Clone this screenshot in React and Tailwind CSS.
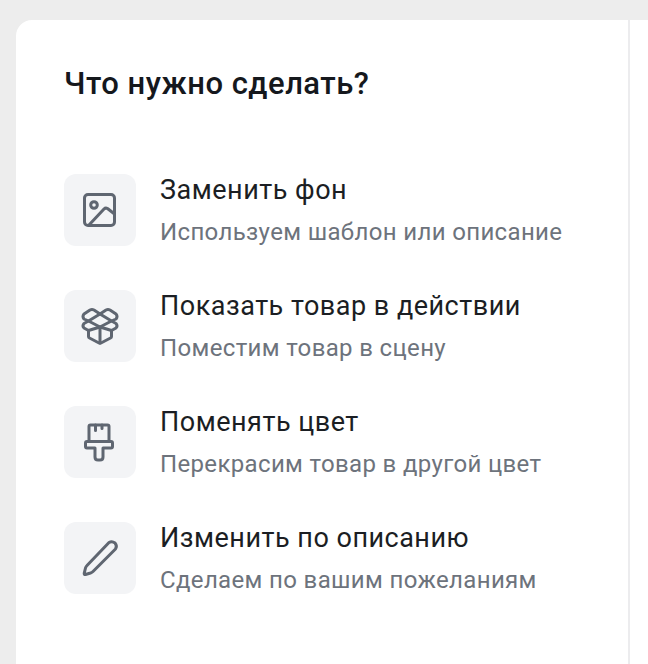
import React from 'react';

const iconProps = {
  width: 40,
  height: 40,
  viewBox: '0 0 40 40',
  fill: 'none',
  stroke: '#5f6671',
  strokeWidth: 3,
  strokeLinecap: 'round',
  strokeLinejoin: 'round',
};

const ImageIcon = () => (
  <svg {...iconProps}>
    <rect x="4.500" y="4.500" width="30" height="31" rx="3.500" />
    <circle cx="14" cy="15" r="3.300" />
    <path d="M9 35 L24 19 Q25.500 17.500 27.500 18.500 L34.500 24" />
  </svg>
);

const BoxIcon = () => (
  <svg {...iconProps}>
    <path d="M20 8 L14 4 Q12 3 10 4 L4 8 Q2 10.500 4 13 L8.500 15 L4 17.500 Q2 20 4 22 L8.500 24.500 L20 21 L31.500 24.500 L36 22 Q38 20 36 17.500 L31.500 15 L36 13 Q38 10.500 36 8 L30 4 Q28 3 26 4 Z" />
    <path d="M8.500 15 L20 8 L31.500 15 L20 21 Z" />
    <path d="M8.500 24.500 V30.500 Q8.500 31.500 9.500 32 L19 37 Q20 37.500 21 37 L30.500 32 Q31.500 31.500 31.500 30.500 V24.500" />
    <path d="M20 21 V37" />
  </svg>
);

const BrushIcon = () => (
  <svg {...iconProps}>
    <path d="M9 19.500 V4.500 Q9 3 10.500 3 H27.500 Q29 3 29 4.500 V19.500" />
    <path d="M15.500 3 V8.500 M22 3 V6.500" />
    <path d="M7 19.500 H31 Q32.500 19.500 32.500 21 V24.500 Q32.500 26 31 26 H23 V35 Q23 38 20 38 H18 Q15 38 15 35 V26 H7 Q5.500 26 5.500 24.500 V21 Q5.500 19.500 7 19.500 Z" />
  </svg>
);

const PenIcon = () => (
  <svg {...iconProps}>
    <path d="M29 4.500 Q32 2.800 35 5 Q37.500 8 35.500 11 L13 33.500 Q12 34.500 10.500 35 L5.500 36.500 Q4 36.800 4.200 35.300 L5.500 30 Q6 28.500 7 27.500 Z" />
  </svg>
);

const items = [
  { title: 'Заменить фон', subtitle: 'Используем шаблон или описание', icon: <ImageIcon /> },
  { title: 'Показать товар в действии', subtitle: 'Поместим товар в сцену', icon: <BoxIcon /> },
  { title: 'Поменять цвет', subtitle: 'Перекрасим товар в другой цвет', icon: <BrushIcon /> },
  { title: 'Изменить по описанию', subtitle: 'Сделаем по вашим пожеланиям', icon: <PenIcon /> },
];

export default function App() {
  return (
    <div className="h-[664px] w-[648px] overflow-hidden bg-[#ededed] pl-4 pt-5 font-['Roboto',sans-serif]">
      <div className="flex h-full rounded-tl-2xl bg-white">
        <div className="w-[614px] border-r-2 border-[#ececee] pl-12 pt-[46px]">
          <h1 className="text-[31px] leading-9 font-medium tracking-[0.5px] text-[#15181d]">Что нужно сделать?</h1>
          <div className="mt-[72px] flex flex-col gap-11">
            {items.map((item) => (
              <div key={item.title} className="flex h-[72px] gap-6">
                <div className="flex size-[72px] items-center justify-center rounded-xl bg-[#f3f4f6]">
                  {item.icon}
                </div>
                <div>
                  <div className="text-[27px] leading-8 tracking-[0.5px] text-[#1b1e23]">{item.title}</div>
                  <div className="mt-[10px] text-[24px] leading-8 tracking-[0.35px] text-[#6d737c]">{item.subtitle}</div>
                </div>
              </div>
            ))}
          </div>
        </div>
      </div>
    </div>
  );
}
